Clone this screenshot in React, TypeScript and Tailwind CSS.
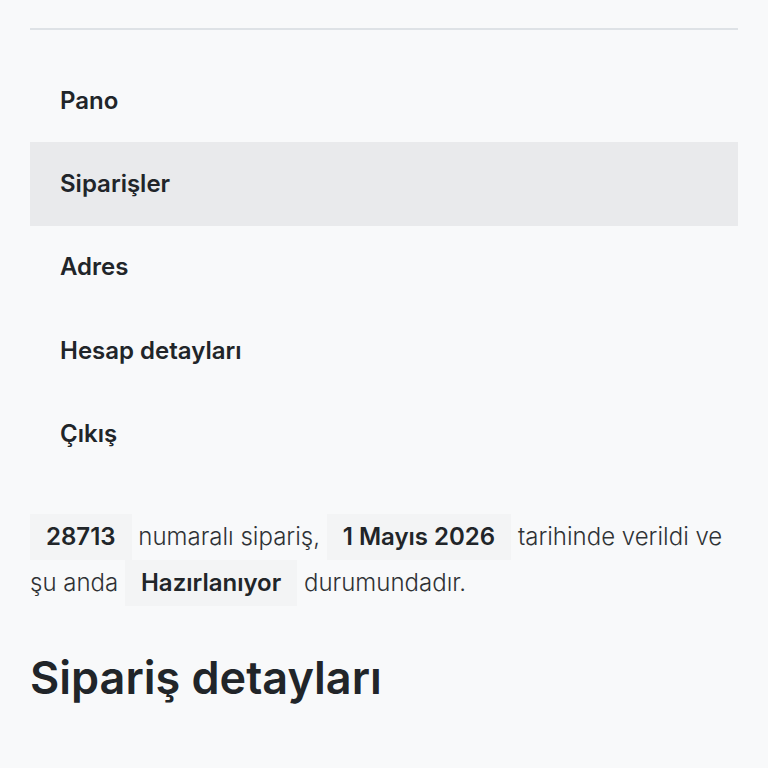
export default function App() {
  const items = ["Pano", "Siparişler", "Adres", "Hesap detayları", "Çıkış"];
  return (
    <div className="min-h-[768px] bg-[#f8f9fa] px-[30px] pt-[28px] text-[#212529] font-['Inter','Noto_Sans',sans-serif]">
      <div className="border-t-2 border-[#dee2e6]" />
      <ul className="mt-[29px] flex flex-col">
        {items.map((label) => (
          <li
            key={label}
            className={`flex h-[83.4px] items-center px-[30px] text-[24px] font-semibold ${
              label === "Siparişler" ? "bg-[#e9eaec]" : ""
            }`}
          >
            {label}
          </li>
        ))}
      </ul>
      <p className="mt-[38px] text-[24px] font-light leading-[46px] text-[#2f3235]">
        <mark className="inline-block bg-[#f3f4f5] px-4 leading-[46px] font-semibold text-[#212529]">28713</mark> numaralı sipariş,{" "}
        <mark className="inline-block bg-[#f3f4f5] px-4 leading-[46px] font-semibold text-[#212529]">1 Mayıs 2026</mark> tarihinde verildi ve şu
        anda <mark className="inline-block bg-[#f3f4f5] px-4 leading-[46px] font-semibold text-[#212529]">Hazırlanıyor</mark> durumundadır.
      </p>
      <h2 className="mt-[44px] text-[45px] font-semibold leading-[56px] text-[#212529]">Sipariş detayları</h2>
    </div>
  );
}
